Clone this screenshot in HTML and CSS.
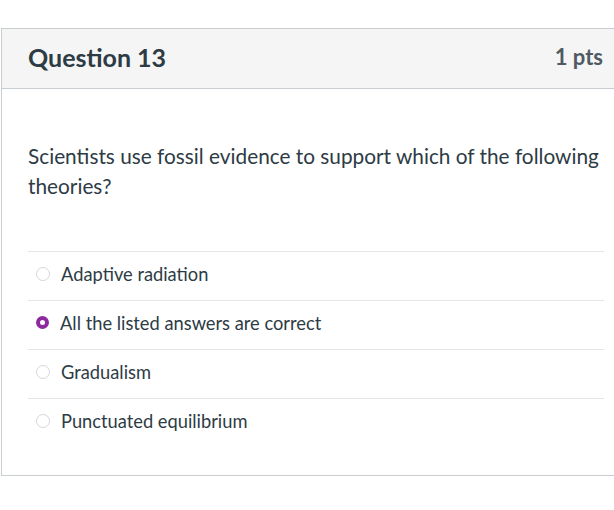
FILE: index.html
```html
<!DOCTYPE html>
<html>
<head>
<meta charset="utf-8">
<link rel="stylesheet" href="styles.css">
</head>
<body>
<div class="card">
  <div class="card-header">
    <h2 class="title">Question 13</h2>
    <span class="pts">1 pts</span>
  </div>
  <div class="card-body">
    <p class="question">Scientists use fossil evidence to support which of the following theories?</p>
    <ul class="answers">
      <li class="answer"><span class="radio"></span><span class="label">Adaptive radiation</span></li>
      <li class="answer"><span class="radio checked"></span><span class="label">All the listed answers are correct</span></li>
      <li class="answer"><span class="radio"></span><span class="label">Gradualism</span></li>
      <li class="answer"><span class="radio"></span><span class="label">Punctuated equilibrium</span></li>
    </ul>
  </div>
</div>
</body>
</html>
```

FILE: styles.css
```css
html, body {
  margin: 0;
  padding: 0;
  background: #ffffff;
}
body {
  font-family: Lato, "Open Sans", sans-serif;
  color: #2d3b45;
}
.card {
  margin: 28px 0 0 1px;
  width: 640px;
  border: 1px solid #c7cdd1;
  border-right: none;
  box-sizing: border-box;
}
.card-header {
  height: 55px;
  background: #f5f5f5;
  border-bottom: 1px solid #c7cdd1;
  display: flex;
  align-items: center;
  justify-content: space-between;
  padding: 0 38px 4px 26px;
}
.title {
  margin: 0;
  font-size: 25px;
  font-weight: 700;
  color: #2d3b45;
}
.pts {
  font-size: 22px;
  font-weight: 700;
  color: #4f5a62;
}
.card-body {
  padding: 52px 0 28px 26px;
  width: 576px;
}
.question {
  margin: 0 0 50px 0;
  font-size: 20.8px;
  line-height: 30px;
}
.answers {
  list-style: none;
  margin: 0;
  padding: 0;
}
.answer {
  display: flex;
  align-items: center;
  height: 43px;
  padding-bottom: 5px;
  border-top: 1px solid #e4e6e8;
}
.radio {
  width: 12px;
  height: 12px;
  border: 1px solid #d4d7da;
  border-radius: 50%;
  margin: 0 11px 0 8px;
  box-sizing: content-box;
  flex: none;
}
.radio.checked {
  width: 5px;
  height: 5px;
  border: 4px solid #8e2a9e;
}
.label {
  font-size: 18.3px;
  color: #2d3b45;
}
```
